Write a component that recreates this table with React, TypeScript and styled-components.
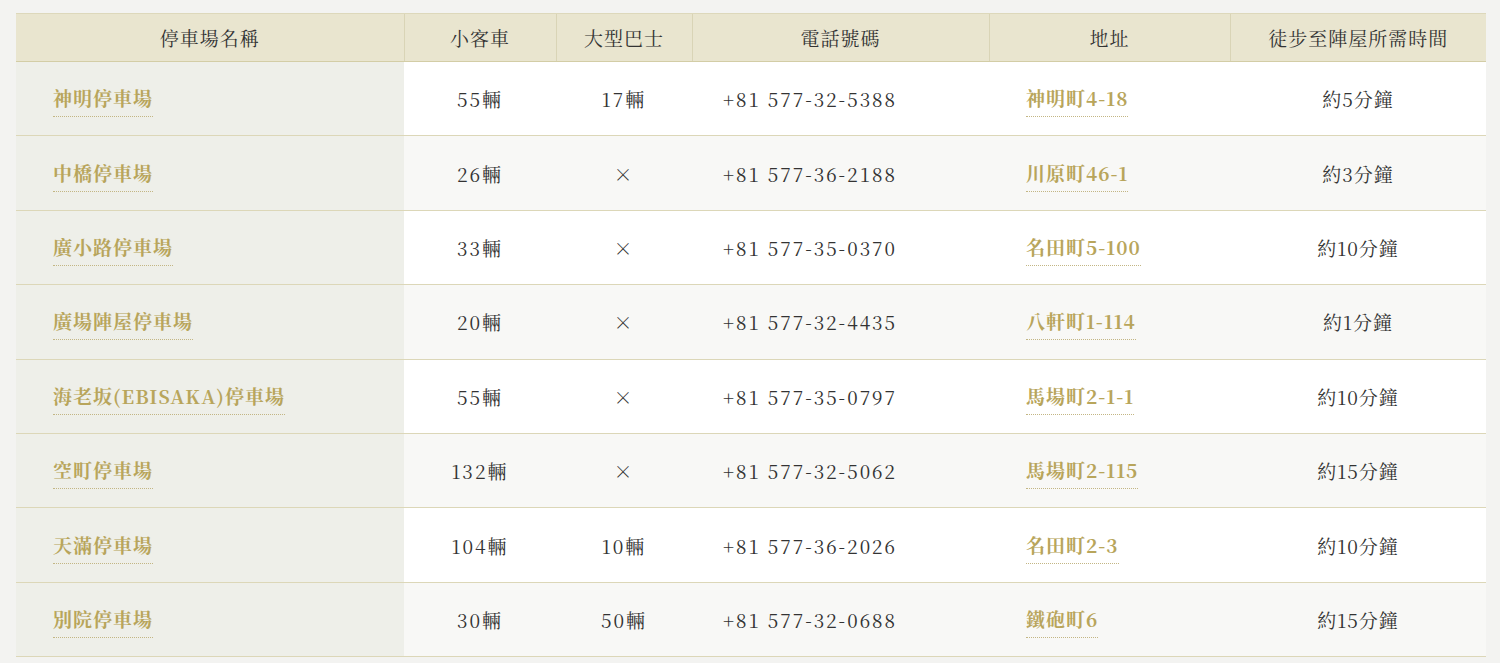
import React from "react";
import styled, { createGlobalStyle } from "styled-components";

const Global = createGlobalStyle`
  html, body { margin: 0; padding: 0; }
  body {
    background: #f3f3f1;
    font-family: "Noto Serif CJK TC", "Liberation Serif", "Noto Sans CJK TC", serif;
    color: #333;
  }
`;

const Page = styled.div`
  padding: 13px 14px 0 16px;
`;

const Table = styled.table`
  width: 1470px;
  border-collapse: collapse;
  table-layout: fixed;
  font-size: 19px;
  letter-spacing: 1px;
`;

const Th = styled.th`
  background: #e9e5cf;
  border-top: 1px solid #ddd8bb;
  border-bottom: 1px solid #d3cda6;
  border-left: 1px solid #d9d4b6;
  height: 47px;
  padding: 0;
  font-weight: normal;
  color: #333;
  text-align: center;
  &:first-child { border-left: none; }
`;

const Tr = styled.tr<{ $alt: boolean }>`
  background: ${(p) => (p.$alt ? "#f8f8f6" : "#ffffff")};
  border-bottom: 1px solid #dcd7b8;
`;

const Td = styled.td<{ $align?: "left" | "center"; $pad?: number; $name?: boolean; $wide?: boolean }>`
  height: 73.4px;
  padding: 0 0 0 ${(p) => p.$pad ?? 0}px;
  text-align: ${(p) => p.$align ?? "center"};
  vertical-align: middle;
  background: ${(p) => (p.$name ? "#eeefe9" : "transparent")};
  color: #333;
  white-space: nowrap;
  letter-spacing: ${(p) => (p.$wide ? "2px" : "1px")};
`;

const Link = styled.a`
  display: inline-block;
  color: #b8a55b;
  font-weight: bold;
  text-decoration: none;
  padding: 4px 0 5px;
  border-bottom: 1px dotted #c3b684;
`;

type Row = {
  name: string;
  car: string;
  bus: string;
  tel: string;
  addr: string;
  walk: string;
};

const rows: Row[] = [
  { name: "神明停車場", car: "55輛", bus: "17輛", tel: "+81 577-32-5388", addr: "神明町4-18", walk: "約5分鐘" },
  { name: "中橋停車場", car: "26輛", bus: "×", tel: "+81 577-36-2188", addr: "川原町46-1", walk: "約3分鐘" },
  { name: "廣小路停車場", car: "33輛", bus: "×", tel: "+81 577-35-0370", addr: "名田町5-100", walk: "約10分鐘" },
  { name: "廣場陣屋停車場", car: "20輛", bus: "×", tel: "+81 577-32-4435", addr: "八軒町1-114", walk: "約1分鐘" },
  { name: "海老坂(EBISAKA)停車場", car: "55輛", bus: "×", tel: "+81 577-35-0797", addr: "馬場町2-1-1", walk: "約10分鐘" },
  { name: "空町停車場", car: "132輛", bus: "×", tel: "+81 577-32-5062", addr: "馬場町2-115", walk: "約15分鐘" },
  { name: "天滿停車場", car: "104輛", bus: "10輛", tel: "+81 577-36-2026", addr: "名田町2-3", walk: "約10分鐘" },
  { name: "別院停車場", car: "30輛", bus: "50輛", tel: "+81 577-32-0688", addr: "鐵砲町6", walk: "約15分鐘" },
];

const widths = [388, 152, 136, 297, 241, 256];
const headers = ["停車場名稱", "小客車", "大型巴士", "電話號碼", "地址", "徒步至陣屋所需時間"];

export default function App() {
  return (
    <Page>
      <Global />
      <Table>
        <colgroup>
          {widths.map((w, i) => (
            <col key={i} style={{ width: w }} />
          ))}
        </colgroup>
        <thead>
          <tr>
            {headers.map((h) => (
              <Th key={h}>{h}</Th>
            ))}
          </tr>
        </thead>
        <tbody>
          {rows.map((r, i) => (
            <Tr key={r.name} $alt={i % 2 === 1}>
              <Td $name $align="left" $pad={37}>
                <Link href="#">{r.name}</Link>
              </Td>
              <Td $wide>{r.car}</Td>
              <Td $wide>{r.bus}</Td>
              <Td $align="left" $pad={31} $wide>{r.tel}</Td>
              <Td $align="left" $pad={37}>
                <Link href="#">{r.addr}</Link>
              </Td>
              <Td>{r.walk}</Td>
            </Tr>
          ))}
        </tbody>
      </Table>
    </Page>
  );
}
